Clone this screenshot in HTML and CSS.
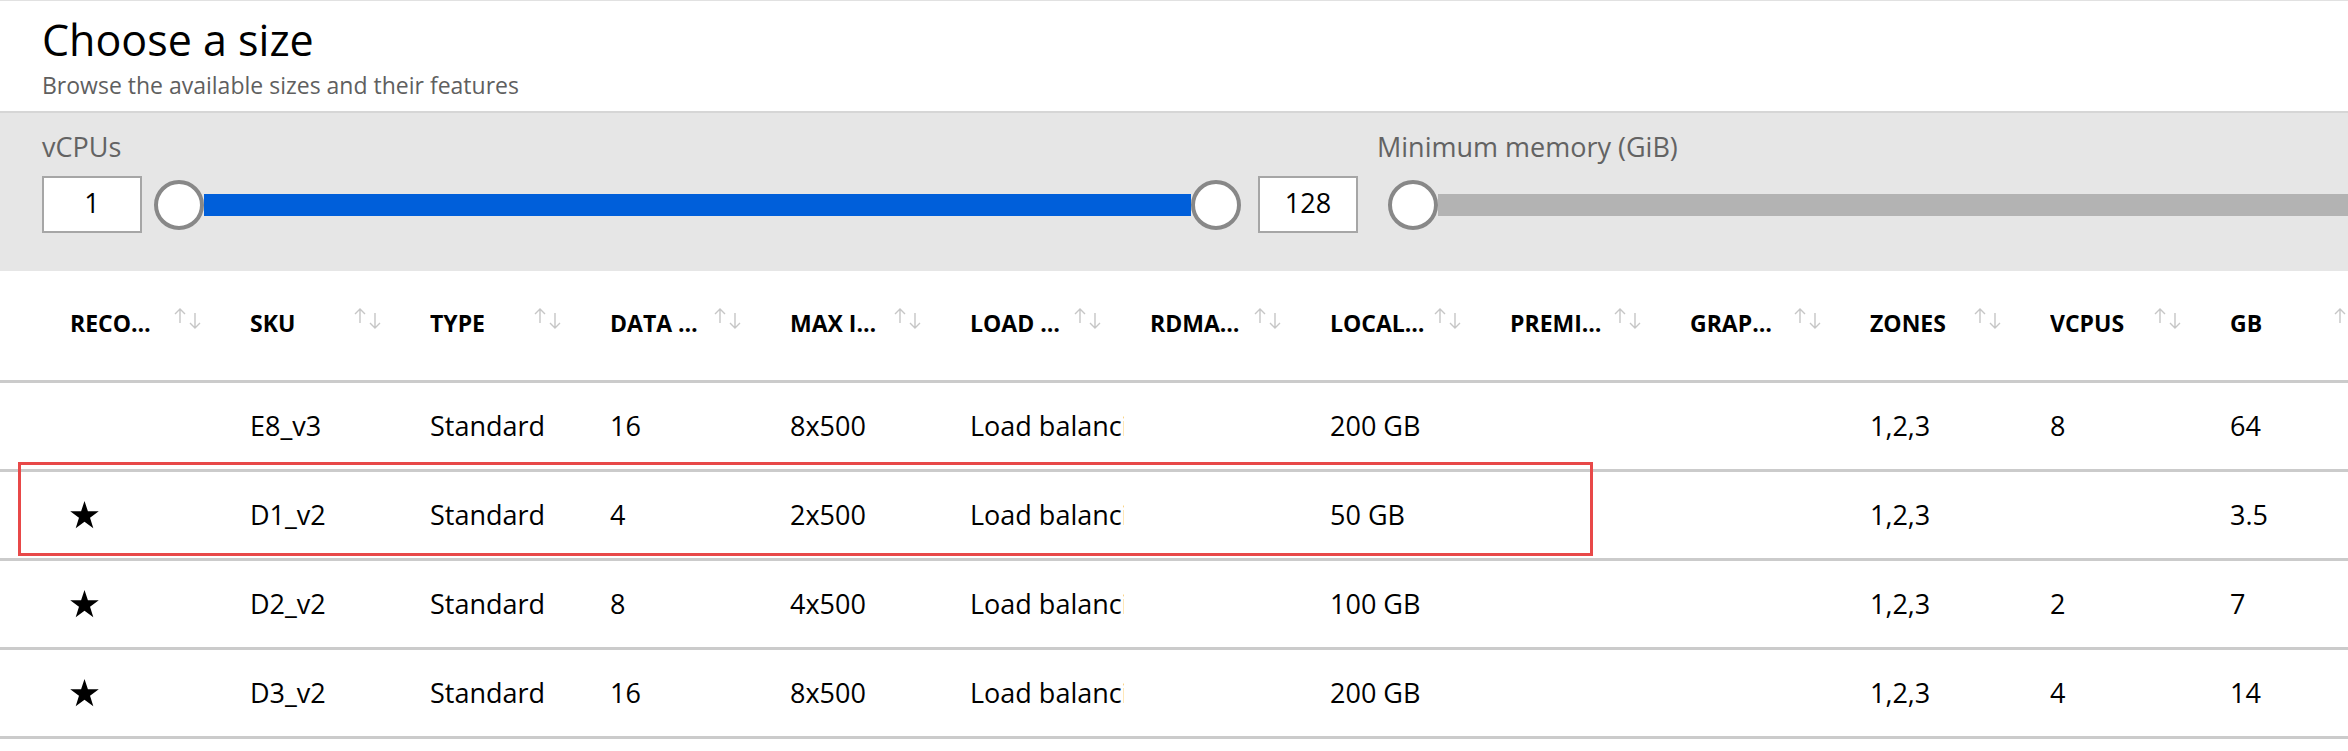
FILE: index.html
```html
<!DOCTYPE html>
<html lang="en">
<head>
<meta charset="utf-8">
<title>Choose a size</title>
<link rel="stylesheet" href="styles.css">
</head>
<body>
<div class="page">
  <header class="blade-head">
    <h1 class="title">Choose a size</h1>
    <p class="subtitle">Browse the available sizes and their features</p>
  </header>

  <section class="filters">
    <div class="filter filter-cpu">
      <div class="filter-label">vCPUs</div>
      <div class="range">
        <div class="num-box">1</div>
        <span class="thumb thumb-first"></span>
        <span class="track track-blue"></span>
        <span class="thumb"></span>
        <div class="num-box num-box-end">128</div>
      </div>
    </div>
    <div class="filter filter-mem">
      <div class="filter-label">Minimum memory (GiB)</div>
      <div class="range">
        <span class="thumb thumb-mem"></span>
        <span class="track track-gray"></span>
      </div>
    </div>
  </section>

  <div class="grid">
    <div class="grid-head">
      <div class="hcell"><span class="hlabel">RECO…</span><svg class="sort" viewBox="0 0 28 21" width="28" height="21"><path d="M6 1V15M1 6L6 1L11 6M21 5V20M16 15L21 20L26 15"/></svg></div>
      <div class="hcell"><span class="hlabel">SKU</span><svg class="sort" viewBox="0 0 28 21" width="28" height="21"><path d="M6 1V15M1 6L6 1L11 6M21 5V20M16 15L21 20L26 15"/></svg></div>
      <div class="hcell"><span class="hlabel">TYPE</span><svg class="sort" viewBox="0 0 28 21" width="28" height="21"><path d="M6 1V15M1 6L6 1L11 6M21 5V20M16 15L21 20L26 15"/></svg></div>
      <div class="hcell"><span class="hlabel">DATA …</span><svg class="sort" viewBox="0 0 28 21" width="28" height="21"><path d="M6 1V15M1 6L6 1L11 6M21 5V20M16 15L21 20L26 15"/></svg></div>
      <div class="hcell"><span class="hlabel">MAX I…</span><svg class="sort" viewBox="0 0 28 21" width="28" height="21"><path d="M6 1V15M1 6L6 1L11 6M21 5V20M16 15L21 20L26 15"/></svg></div>
      <div class="hcell"><span class="hlabel">LOAD …</span><svg class="sort" viewBox="0 0 28 21" width="28" height="21"><path d="M6 1V15M1 6L6 1L11 6M21 5V20M16 15L21 20L26 15"/></svg></div>
      <div class="hcell"><span class="hlabel">RDMA…</span><svg class="sort" viewBox="0 0 28 21" width="28" height="21"><path d="M6 1V15M1 6L6 1L11 6M21 5V20M16 15L21 20L26 15"/></svg></div>
      <div class="hcell"><span class="hlabel">LOCAL…</span><svg class="sort" viewBox="0 0 28 21" width="28" height="21"><path d="M6 1V15M1 6L6 1L11 6M21 5V20M16 15L21 20L26 15"/></svg></div>
      <div class="hcell"><span class="hlabel">PREMI…</span><svg class="sort" viewBox="0 0 28 21" width="28" height="21"><path d="M6 1V15M1 6L6 1L11 6M21 5V20M16 15L21 20L26 15"/></svg></div>
      <div class="hcell"><span class="hlabel">GRAP…</span><svg class="sort" viewBox="0 0 28 21" width="28" height="21"><path d="M6 1V15M1 6L6 1L11 6M21 5V20M16 15L21 20L26 15"/></svg></div>
      <div class="hcell"><span class="hlabel">ZONES</span><svg class="sort" viewBox="0 0 28 21" width="28" height="21"><path d="M6 1V15M1 6L6 1L11 6M21 5V20M16 15L21 20L26 15"/></svg></div>
      <div class="hcell"><span class="hlabel">VCPUS</span><svg class="sort" viewBox="0 0 28 21" width="28" height="21"><path d="M6 1V15M1 6L6 1L11 6M21 5V20M16 15L21 20L26 15"/></svg></div>
      <div class="hcell"><span class="hlabel">GB</span><svg class="sort" viewBox="0 0 28 21" width="28" height="21"><path d="M6 1V15M1 6L6 1L11 6M21 5V20M16 15L21 20L26 15"/></svg></div>
    </div>

    <div class="grid-row">
      <div class="cell"></div>
      <div class="cell">E8_v3</div>
      <div class="cell">Standard</div>
      <div class="cell">16</div>
      <div class="cell">8x500</div>
      <div class="cell">Load balancing</div>
      <div class="cell"></div>
      <div class="cell">200 GB</div>
      <div class="cell"></div>
      <div class="cell"></div>
      <div class="cell">1,2,3</div>
      <div class="cell">8</div>
      <div class="cell">64</div>
    </div>

    <div class="grid-row">
      <div class="cell"><svg class="star" viewBox="0 0 29 28" width="29" height="28"><polygon points="14.5,0 17.91,10.31 28.77,10.36 20.02,16.79 23.32,27.14 14.5,20.8 5.68,27.14 8.98,16.79 0.23,10.36 11.09,10.31"/></svg></div>
      <div class="cell">D1_v2</div>
      <div class="cell">Standard</div>
      <div class="cell">4</div>
      <div class="cell">2x500</div>
      <div class="cell">Load balancing</div>
      <div class="cell"></div>
      <div class="cell">50 GB</div>
      <div class="cell"></div>
      <div class="cell"></div>
      <div class="cell">1,2,3</div>
      <div class="cell"></div>
      <div class="cell">3.5</div>
    </div>

    <div class="grid-row">
      <div class="cell"><svg class="star" viewBox="0 0 29 28" width="29" height="28"><polygon points="14.5,0 17.91,10.31 28.77,10.36 20.02,16.79 23.32,27.14 14.5,20.8 5.68,27.14 8.98,16.79 0.23,10.36 11.09,10.31"/></svg></div>
      <div class="cell">D2_v2</div>
      <div class="cell">Standard</div>
      <div class="cell">8</div>
      <div class="cell">4x500</div>
      <div class="cell">Load balancing</div>
      <div class="cell"></div>
      <div class="cell">100 GB</div>
      <div class="cell"></div>
      <div class="cell"></div>
      <div class="cell">1,2,3</div>
      <div class="cell">2</div>
      <div class="cell">7</div>
    </div>

    <div class="grid-row">
      <div class="cell"><svg class="star" viewBox="0 0 29 28" width="29" height="28"><polygon points="14.5,0 17.91,10.31 28.77,10.36 20.02,16.79 23.32,27.14 14.5,20.8 5.68,27.14 8.98,16.79 0.23,10.36 11.09,10.31"/></svg></div>
      <div class="cell">D3_v2</div>
      <div class="cell">Standard</div>
      <div class="cell">16</div>
      <div class="cell">8x500</div>
      <div class="cell">Load balancing</div>
      <div class="cell"></div>
      <div class="cell">200 GB</div>
      <div class="cell"></div>
      <div class="cell"></div>
      <div class="cell">1,2,3</div>
      <div class="cell">4</div>
      <div class="cell">14</div>
    </div>
  </div>

  <div class="highlight"></div>
</div>
</body>
</html>
```

FILE: styles.css
```css
* {
  box-sizing: border-box;
}

html,
body {
  margin: 0;
  padding: 0;
}

body {
  width: 2348px;
  height: 751px;
  overflow: hidden;
  background: #ffffff;
  color: #000000;
  font-family: "Open Sans", "Noto Sans", sans-serif;
}

.page {
  position: relative;
  width: 2348px;
  height: 751px;
  overflow: hidden;
}

/* ---------- blade header ---------- */
.blade-head {
  height: 111px;
  border-top: 1px solid #e1e1e1;
  padding: 9px 0 0 42px;
}

.title {
  margin: 0;
  font-size: 43px;
  line-height: 60px;
  font-weight: 500;
}

.subtitle {
  margin: 0;
  font-size: 23px;
  line-height: 30px;
  color: #5f5f5f;
}

/* ---------- filters ---------- */
.filters {
  height: 160px;
  background: #e6e6e6;
  border-top: 2px solid #d6d6d6;
  display: flex;
  padding: 17px 0 0 42px;
}

.filter {
  display: flex;
  flex-direction: column;
  flex: none;
}

.filter-mem {
  margin-left: 19px;
}

.filter-label {
  font-size: 27px;
  line-height: 34px;
  color: #636363;
}

.range {
  display: flex;
  align-items: center;
  height: 57px;
  margin-top: 12px;
}

.num-box {
  width: 100px;
  height: 57px;
  flex: none;
  border: 2px solid #a6a6a6;
  background: #ffffff;
  display: flex;
  align-items: center;
  justify-content: center;
  padding-bottom: 3px;
  font-size: 27px;
  line-height: 36px;
}

.num-box-end {
  margin-left: 17px;
}

.thumb {
  width: 50px;
  height: 50px;
  flex: none;
  border: 4px solid #888888;
  border-radius: 50%;
  background: #ffffff;
}

.thumb-first {
  margin-left: 12px;
}

.thumb-mem {
  margin-left: 11px;
}

.track {
  height: 22px;
  flex: none;
}

.track-blue {
  width: 987px;
  background: #005fda;
}

.track-gray {
  width: 1100px;
  background: #b3b3b3;
}

/* ---------- grid ---------- */
.grid-head,
.grid-row {
  display: grid;
  grid-template-columns: repeat(13, 154px);
  column-gap: 26px;
  padding-left: 70px;
  align-items: center;
}

.grid-head {
  height: 112px;
  border-bottom: 3px solid #cbcbcb;
  padding-bottom: 5px;
}

.hcell {
  display: flex;
  align-items: center;
  white-space: nowrap;
}

.hlabel {
  width: 104px;
  flex: none;
  overflow: hidden;
  font-size: 23px;
  line-height: 30px;
  font-weight: 700;
}

.sort {
  flex: none;
  margin-bottom: 9px;
  fill: none;
  stroke: #c6c6c6;
  stroke-width: 1.4;
}

.grid-row {
  height: 89px;
  border-bottom: 3px solid #cbcbcb;
}

.cell {
  overflow: hidden;
  white-space: nowrap;
  font-size: 27px;
  line-height: 36px;
}

.star {
  display: block;
  fill: #000000;
}

/* ---------- annotation overlay ---------- */
.highlight {
  position: absolute;
  left: 18px;
  top: 462px;
  width: 1575px;
  height: 94px;
  border: 3px solid #e84848;
  pointer-events: none;
}
```
